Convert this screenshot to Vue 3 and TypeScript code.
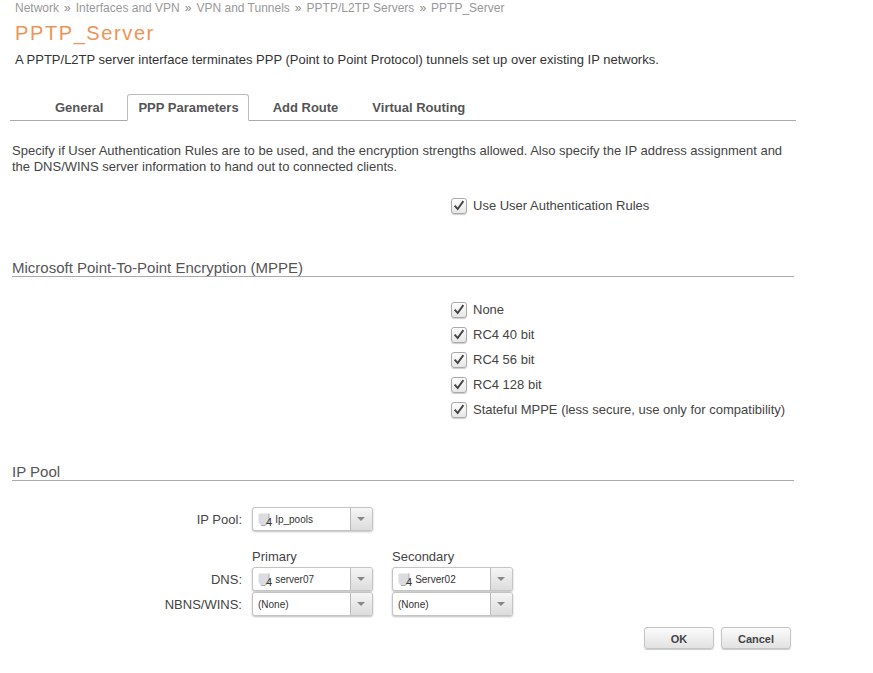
<script setup lang="ts">
const crumbs: string[] = ['Network', 'Interfaces and VPN', 'VPN and Tunnels', 'PPTP/L2TP Servers', 'PPTP_Server']
const tabs: string[] = ['General', 'PPP Parameters', 'Add Route', 'Virtual Routing']
const mppe: string[] = ['None', 'RC4 40 bit', 'RC4 56 bit', 'RC4 128 bit', 'Stateful MPPE (less secure, use only for compatibility)']
</script>

<template>
  <div class="page">
    <nav class="crumbs">
      <template v-for="(c, i) in crumbs" :key="c">
        <span v-if="i > 0" class="sep">»</span><span>{{ c }}</span>
      </template>
    </nav>
    <h1 class="title">PPTP_Server</h1>
    <p class="desc">A PPTP/L2TP server interface terminates PPP (Point to Point Protocol) tunnels set up over existing IP networks.</p>

    <div class="tabs">
      <div v-for="(t, i) in tabs" :key="t" class="tab" :class="{ active: i === 1 }">{{ t }}</div>
    </div>

    <p class="intro">Specify if User Authentication Rules are to be used, and the encryption strengths allowed. Also specify the IP address assignment and the DNS/WINS server information to hand out to connected clients.</p>

    <div class="checks first">
      <label class="check">
        <span class="box"><svg viewBox="0 0 16 16" width="14" height="14"><path d="M3 7.5 L6.5 11.5 L13 2.5" fill="none" stroke="#444" stroke-width="2.2" /></svg></span>
        Use User Authentication Rules
      </label>
    </div>

    <h2 class="section mppe">Microsoft Point-To-Point Encryption (MPPE)</h2>
    <div class="checks list">
      <label v-for="m in mppe" :key="m" class="check">
        <span class="box"><svg viewBox="0 0 16 16" width="14" height="14"><path d="M3 7.5 L6.5 11.5 L13 2.5" fill="none" stroke="#444" stroke-width="2.2" /></svg></span>
        {{ m }}
      </label>
    </div>

    <h2 class="section pool">IP Pool</h2>

    <div class="grid poolrow">
      <div class="lbl">IP Pool:</div>
      <div class="select">
        <span class="val"><svg class="ico" viewBox="0 0 12 13" width="12" height="13"><path d="M0.5 1.5 Q0.5 0.5 1.5 0.5 L11 0.5 L11 9 L7 12.5 L3 12.5 L0.5 9.5 Z" fill="#dadcdf" /><path d="M3 12.5 L7 12.5 L11 9 L11 0.5" fill="none" stroke="#a9adb1" /></svg><b class="four">4</b><span>Ip_pools</span></span>
        <span class="arrow"></span>
      </div>
    </div>

    <div class="grid heads">
      <div></div>
      <div class="head">Primary</div>
      <div class="head">Secondary</div>
    </div>
    <div class="grid row">
      <div class="lbl">DNS:</div>
      <div class="select">
        <span class="val"><svg class="ico" viewBox="0 0 12 13" width="12" height="13"><path d="M0.5 1.5 Q0.5 0.5 1.5 0.5 L11 0.5 L11 9 L7 12.5 L3 12.5 L0.5 9.5 Z" fill="#dadcdf" /><path d="M3 12.5 L7 12.5 L11 9 L11 0.5" fill="none" stroke="#a9adb1" /></svg><b class="four">4</b><span>server07</span></span>
        <span class="arrow"></span>
      </div>
      <div class="select">
        <span class="val"><svg class="ico" viewBox="0 0 12 13" width="12" height="13"><path d="M0.5 1.5 Q0.5 0.5 1.5 0.5 L11 0.5 L11 9 L7 12.5 L3 12.5 L0.5 9.5 Z" fill="#dadcdf" /><path d="M3 12.5 L7 12.5 L11 9 L11 0.5" fill="none" stroke="#a9adb1" /></svg><b class="four">4</b><span>Server02</span></span>
        <span class="arrow"></span>
      </div>
    </div>
    <div class="grid row2">
      <div class="lbl">NBNS/WINS:</div>
      <div class="select"><span class="val none">(None)</span><span class="arrow"></span></div>
      <div class="select"><span class="val none">(None)</span><span class="arrow"></span></div>
    </div>

    <div class="buttons">
      <button class="btn ok">OK</button>
      <button class="btn cancel">Cancel</button>
    </div>
  </div>
</template>

<style>
html, body { margin: 0; background: #fff; }
</style>

<style scoped>
.page {
  width: 873px;
  height: 673px;
  overflow: hidden;
  box-sizing: border-box;
  font-family: "Liberation Sans", Arial, sans-serif;
  font-size: 13px;
  color: #444;
  background: #fff;
}
.crumbs {
  padding: 1px 0 0 15px;
  height: 14px;
  line-height: 14px;
  font-size: 12px;
  color: #999;
  white-space: nowrap;
}
.sep { margin: 0 5px; color: #888; }
.title {
  margin: 5px 0 0 15px;
  font-size: 20px;
  font-weight: 400;
  line-height: 26px;
  letter-spacing: 1.6px;
  color: #ef9355;
}
.desc {
  margin: 6px 0 0 15px;
  font-size: 13px;
  line-height: 16px;
  color: #333;
  white-space: nowrap;
}
.tabs {
  margin: 26px 0 0 10px;
  width: 754px;
  height: 26px;
  display: flex;
  align-items: flex-end;
  border-bottom: 1px solid #aaa;
  padding-left: 32px;
}
.tab {
  height: 26px;
  line-height: 28px;
  font-size: 13px;
  font-weight: 700;
  color: #555;
  padding: 0 13px;
  margin-right: 8px;
  box-sizing: border-box;
  white-space: nowrap;
}
.tab:first-child { margin-right: 11px; }
.tab.active {
  border: 1px solid #bbb;
  border-bottom: 1px solid #fff;
  border-radius: 3px 3px 0 0;
  background: #fff;
  margin-bottom: -1px;
  margin-right: 11px;
  height: 27px;
  line-height: 26px;
  padding: 0 9px 0 10px;
}
.intro {
  margin: 22px 0 0 12px;
  width: 780px;
  font-size: 13px;
  line-height: 16px;
  color: #444;
}
.checks { margin-left: 451px; }
.first { margin-top: 18px; }
.check {
  display: flex;
  align-items: center;
  height: 25px;
  gap: 6px;
  font-size: 13px;
  color: #444;
  white-space: nowrap;
}
.box {
  width: 14px;
  height: 14px;
  border: 1px solid #aaa;
  border-radius: 3px;
  background: linear-gradient(#fff, #e6e6e6);
  box-shadow: 0 1px 1px rgba(0,0,0,.2);
  display: flex;
  align-items: center;
  justify-content: center;
}
.section {
  margin: 0 0 0 12px;
  width: 782px;
  font-size: 15px;
  font-weight: 400;
  line-height: 16px;
  color: #555;
  border-bottom: 1px solid #aaa;
}
.mppe { margin-top: 42px; }
.list { margin-top: 20px; }
.pool { margin-top: 42px; }
.grid {
  display: grid;
  grid-template-columns: 252px 140px 121px;
  align-items: center;
}
.lbl {
  text-align: right;
  font-size: 13px;
  color: #444;
  padding-right: 10px;
}
.select {
  width: 121px;
  height: 24px;
  box-sizing: border-box;
  border: 1px solid #c4c4c4;
  border-radius: 3px;
  display: flex;
  background: #fff;
  box-shadow: 0 1px 2px rgba(0,0,0,.25);
}
.val {
  flex: 1;
  display: flex;
  align-items: center;
  font-size: 10px;
  color: #333;
  padding-left: 5px;
}
.ico { flex: none; margin-right: -4px; }
.four {
  position: relative;
  font-weight: 400;
  font-size: 11px;
  margin: 5px 3px 0 0;
  color: #333;
}
.arrow {
  width: 21px;
  flex: none;
  background: linear-gradient(#f5f5f5, #dcdcdc);
  border-left: 1px solid #bbb;
  border-radius: 0 2px 2px 0;
  position: relative;
}
.arrow::after {
  content: "";
  position: absolute;
  left: 6px;
  top: 9px;
  border-left: 4px solid transparent;
  border-right: 4px solid transparent;
  border-top: 4px solid #888;
}
.poolrow { margin-top: 26px; }
.heads { margin-top: 18px; height: 15px; }
.head { font-size: 13px; color: #444; line-height: 15px; }
.row { margin-top: 3px; }
.row2 { margin-top: 1px; }
.buttons {
  display: flex;
  gap: 7px;
  margin: 11px 0 0 644px;
}
.btn {
  width: 70px;
  height: 22px;
  padding: 1px 0 0;
  font-family: inherit;
  font-size: 11px;
  font-weight: 700;
  color: #444;
  border: 1px solid #c4c4c4;
  border-radius: 3px;
  background: linear-gradient(#fbfbfb, #e2e2e2);
  box-shadow: 0 1px 1px rgba(0,0,0,.2);
}
</style>
